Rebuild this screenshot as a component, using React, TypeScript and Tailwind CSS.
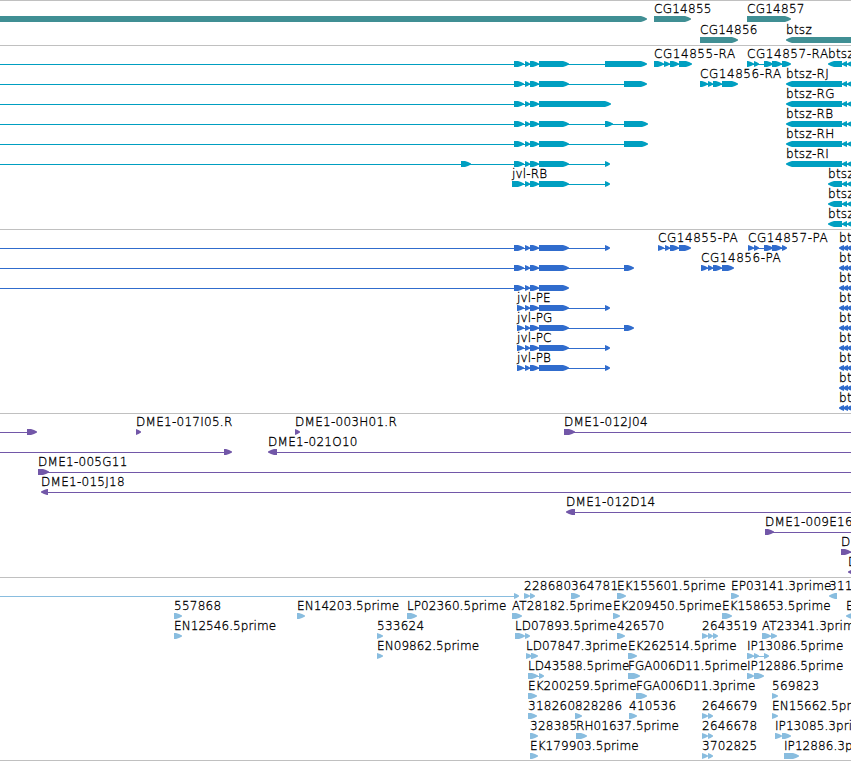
import clsx from 'clsx';

type Span = [number, number];

interface Feature {
  label?: string;
  x?: number;
  spans: Span[];
  line?: Span;
  reverse?: boolean;
}

interface Track {
  name: string;
  color: string;
  rows: Feature[][];
}

const END = 860;
const HEAD = 6;

const jvl = (start: number, tail: Span[] = [], from = 0): Feature => ({
  line: [from, tail.length ? tail[tail.length - 1][0] : 540],
  spans: [[start, 524], [525, 530], [530, 539], [539, 569], ...tail],
});

const named = (label: string, x: number, feature: Feature): Feature => ({ ...feature, label, x });

const est = (label: string, x: number, ...spans: Span[]): Feature => ({ label, x, spans });

const btsz = (label: string): Feature => ({
  label,
  x: 786,
  reverse: true,
  line: [840, END],
  spans: [[786, 842], [842, 847], [847, 852]],
});

const btszShort: Feature = {
  label: 'btsz',
  x: 828,
  reverse: true,
  line: [840, END],
  spans: [[828, 842], [842, 847], [847, 852]],
};

const btszProtein: Feature = {
  label: 'bt',
  x: 839,
  reverse: true,
  spans: [[839, 844], [843, 848], [847, 852]],
};

const tracks: Track[] = [
  {
    name: 'genes',
    color: 'text-[#408f94]',
    rows: [
      [
        { spans: [[-10, 647]] },
        est('CG14855', 654, [654, 691]),
        est('CG14857', 747, [747, 791]),
      ],
      [
        est('CG14856', 700, [700, 738]),
        { label: 'btsz', x: 786, reverse: true, spans: [[786, END]] },
      ],
    ],
  },
  {
    name: 'transcripts',
    color: 'text-[#009fc1]',
    rows: [
      [
        jvl(514, [[605, 647]]),
        { label: 'CG14855-RA', x: 654, line: [654, 690], spans: [[654, 664], [664, 670], [670, 679], [679, 692]] },
        { label: 'CG14857-RA', x: 747, line: [747, 788], spans: [[747, 754], [754, 759], [764, 773], [772, 782], [782, 791]] },
        btszShort,
      ],
      [
        jvl(514, [[624, 647]]),
        { label: 'CG14856-RA', x: 700, line: [700, 735], spans: [[700, 708], [708, 713], [713, 722], [722, 738]] },
        btsz('btsz-RJ'),
      ],
      [
        { line: [0, 540], spans: [[514, 524], [525, 530], [530, 539], [539, 611]] },
        btsz('btsz-RG'),
      ],
      [jvl(514, [[605, 613], [624, 648]]), btsz('btsz-RB')],
      [jvl(514, [[624, 648]]), btsz('btsz-RH')],
      [{ spans: [[461, 471]] }, jvl(514, [[605, 610]]), btsz('btsz-RI')],
      [named('jvl-RB', 512, jvl(512, [[605, 610]], 512)), btszShort],
      [btszShort],
      [btszShort],
    ],
  },
  {
    name: 'proteins',
    color: 'text-[#306ccd]',
    rows: [
      [
        jvl(514, [[605, 610]]),
        { label: 'CG14855-PA', x: 658, line: [658, 688], spans: [[658, 664], [665, 670], [670, 679], [679, 691]] },
        { label: 'CG14857-PA', x: 748, line: [748, 784], spans: [[748, 754], [754, 759], [764, 773], [772, 782], [782, 787]] },
        btszProtein,
      ],
      [
        jvl(514, [[624, 634]]),
        { label: 'CG14856-PA', x: 701, line: [701, 730], spans: [[701, 708], [708, 713], [713, 722], [722, 734]] },
        btszProtein,
      ],
      [jvl(514), btszProtein],
      [named('jvl-PE', 517, jvl(517, [[605, 610]], 517)), btszProtein],
      [named('jvl-PG', 517, jvl(517, [[624, 634]], 517)), btszProtein],
      [named('jvl-PC', 517, jvl(517, [[605, 610]], 517)), btszProtein],
      [named('jvl-PB', 517, jvl(517, [[605, 610]], 517)), btszProtein],
      [btszProtein],
      [btszProtein],
    ],
  },
  {
    name: 'bacs',
    color: 'text-[#7257a8]',
    rows: [
      [
        { line: [0, 30], spans: [[27, 37]] },
        est('DME1-017I05.R', 136, [136, 141]),
        est('DME1-003H01.R', 295, [295, 300]),
        { label: 'DME1-012J04', x: 564, line: [564, END], spans: [[564, 575]] },
      ],
      [
        { line: [0, 228], spans: [[224, 232]] },
        { label: 'DME1-021O10', x: 268, reverse: true, line: [270, END], spans: [[268, 277]] },
      ],
      [{ label: 'DME1-005G11', x: 38, line: [38, END], spans: [[38, 49]] }],
      [{ label: 'DME1-015J18', x: 41, reverse: true, line: [44, END], spans: [[41, 48]] }],
      [{ label: 'DME1-012D14', x: 566, reverse: true, line: [570, END], spans: [[566, 575]] }],
      [{ label: 'DME1-009E16', x: 765, line: [765, END], spans: [[765, 774]] }],
      [{ label: 'D', x: 841, line: [841, END], spans: [[841, 851]] }],
      [{ label: 'D', x: 848, reverse: true, spans: [[848, 856]] }],
    ],
  },
  {
    name: 'ests',
    color: 'text-[#89bddf]',
    rows: [
      [
        { line: [0, 516], spans: [[514, 519]] },
        est('228680', 524, [524, 530], [530, 535]),
        est('364781', 571, [571, 580]),
        est('EK155601.5prime', 617, [617, 626]),
        est('EP03141.3prime', 731, [731, 739]),
        { label: '311', x: 829, reverse: true, spans: [[829, 837]] },
      ],
      [
        est('557868', 174, [174, 182]),
        est('EN14203.5prime', 297, [297, 305]),
        est('LP02360.5prime', 407, [407, 417]),
        est('AT28182.5prime', 512, [512, 522]),
        est('EK209450.5prime', 613, [613, 620]),
        est('EK158653.5prime', 722, [722, 732]),
        { label: 'E', x: 846, reverse: true, spans: [[846, 856]] },
      ],
      [
        est('EN12546.5prime', 174, [174, 182]),
        est('533624', 377, [377, 383]),
        est('LD07893.5prime', 515, [515, 525], [525, 530]),
        est('426570', 617, [617, 625]),
        est('2643519', 702, [702, 708], [708, 713], [713, 718]),
        { label: 'AT23341.3prime', x: 762, line: [762, 774], spans: [[762, 771], [771, 777]] },
      ],
      [
        est('EN09862.5prime', 377, [377, 383]),
        est('LD07847.3prime', 526, [526, 532], [531, 538]),
        est('EK262514.5prime', 628, [628, 637]),
        { label: 'IP13086.5prime', x: 747, line: [747, 766], spans: [[747, 754], [754, 759], [764, 769]] },
      ],
      [
        { label: 'LD43588.5prime', x: 528, line: [528, 541], spans: [[528, 538], [539, 544]] },
        est('FGA006D11.5prime', 628, [628, 640]),
        est('IP12886.5prime', 747, [747, 754], [754, 764]),
      ],
      [
        est('EK200259.5prime', 528, [528, 537]),
        est('FGA006D11.3prime', 636, [636, 647]),
        est('569823', 772, [772, 778]),
      ],
      [
        est('318260', 528, [528, 537]),
        est('828286', 575, [575, 582]),
        est('410536', 629, [629, 637]),
        est('2646679', 702, [702, 708], [708, 713]),
        est('EN15662.5prime', 772, [772, 778]),
      ],
      [
        est('328385', 530, [530, 538]),
        est('RH01637.5prime', 576, [576, 587]),
        est('2646678', 702, [702, 708], [708, 713]),
        est('IP13085.3prime', 775, [775, 782], [782, 791]),
      ],
      [
        est('EK179903.5prime', 530, [530, 538]),
        est('3702825', 702, [702, 708], [708, 713]),
        est('IP12886.3prime', 784, [784, 799]),
      ],
    ],
  },
];

// bar with a slightly rounded arrow head, 6px tall
function arrow([a, b]: Span, reverse?: boolean) {
  const head = Math.min(HEAD, b - a);
  const mid = head / 2;
  return reverse
    ? `${b},0 ${a + head},0 ${a + mid},1 ${a},2.5 ${a},3.5 ${a + mid},5 ${a + head},6 ${b},6`
    : `${a},0 ${b - head},0 ${b - mid},1 ${b},2.5 ${b},3.5 ${b - mid},5 ${b - head},6 ${a},6`;
}

function tracking(label: string) {
  if (label.endsWith('prime')) return 'tracking-[0.07px]';
  if (/^CG.*-/.test(label)) return 'tracking-[0.55px]';
  if (label.startsWith('jvl')) return 'tracking-[0.15px]';
  return 'tracking-[0.27px]';
}

function Row({ features, color }: { features: Feature[]; color: string }) {
  return (
    <div className="relative flex h-5 items-end overflow-x-clip">
      <svg className={clsx('block h-1.5 w-full shrink-0', color)} fill="currentColor">
        {features.map((f, i) => (
          <g key={i}>
            {f.line && <rect x={f.line[0]} y={3} width={f.line[1] - f.line[0]} height={1} />}
            {f.spans.map((s, j) => (
              <polygon key={j} points={arrow(s, f.reverse)} />
            ))}
          </g>
        ))}
      </svg>
      {features.map((f, i) =>
        f.label ? (
          <span
            key={i}
            className={clsx(
              'absolute top-0 text-[12px] leading-[14px] font-extralight whitespace-nowrap text-black [-webkit-text-stroke:0.3px_black]',
              tracking(f.label),
            )}
            style={{ left: f.x }}
          >
            {f.label}
          </span>
        ) : null,
      )}
    </div>
  );
}

export default function App() {
  return (
    <div className="w-[851px] overflow-hidden border-b border-[#c0c0c0] bg-white font-['DejaVu_Sans',sans-serif]">
      {tracks.map((track) => (
        <section
          key={track.name}
          className="flex flex-col border-t border-[#c0c0c0] pt-px pb-0.5 last:pb-px"
        >
          <div className={clsx('flex flex-col', track.name === 'genes' && 'gap-px')}>
            {track.rows.map((features, i) => (
              <Row key={i} features={features} color={track.color} />
            ))}
          </div>
        </section>
      ))}
    </div>
  );
}
